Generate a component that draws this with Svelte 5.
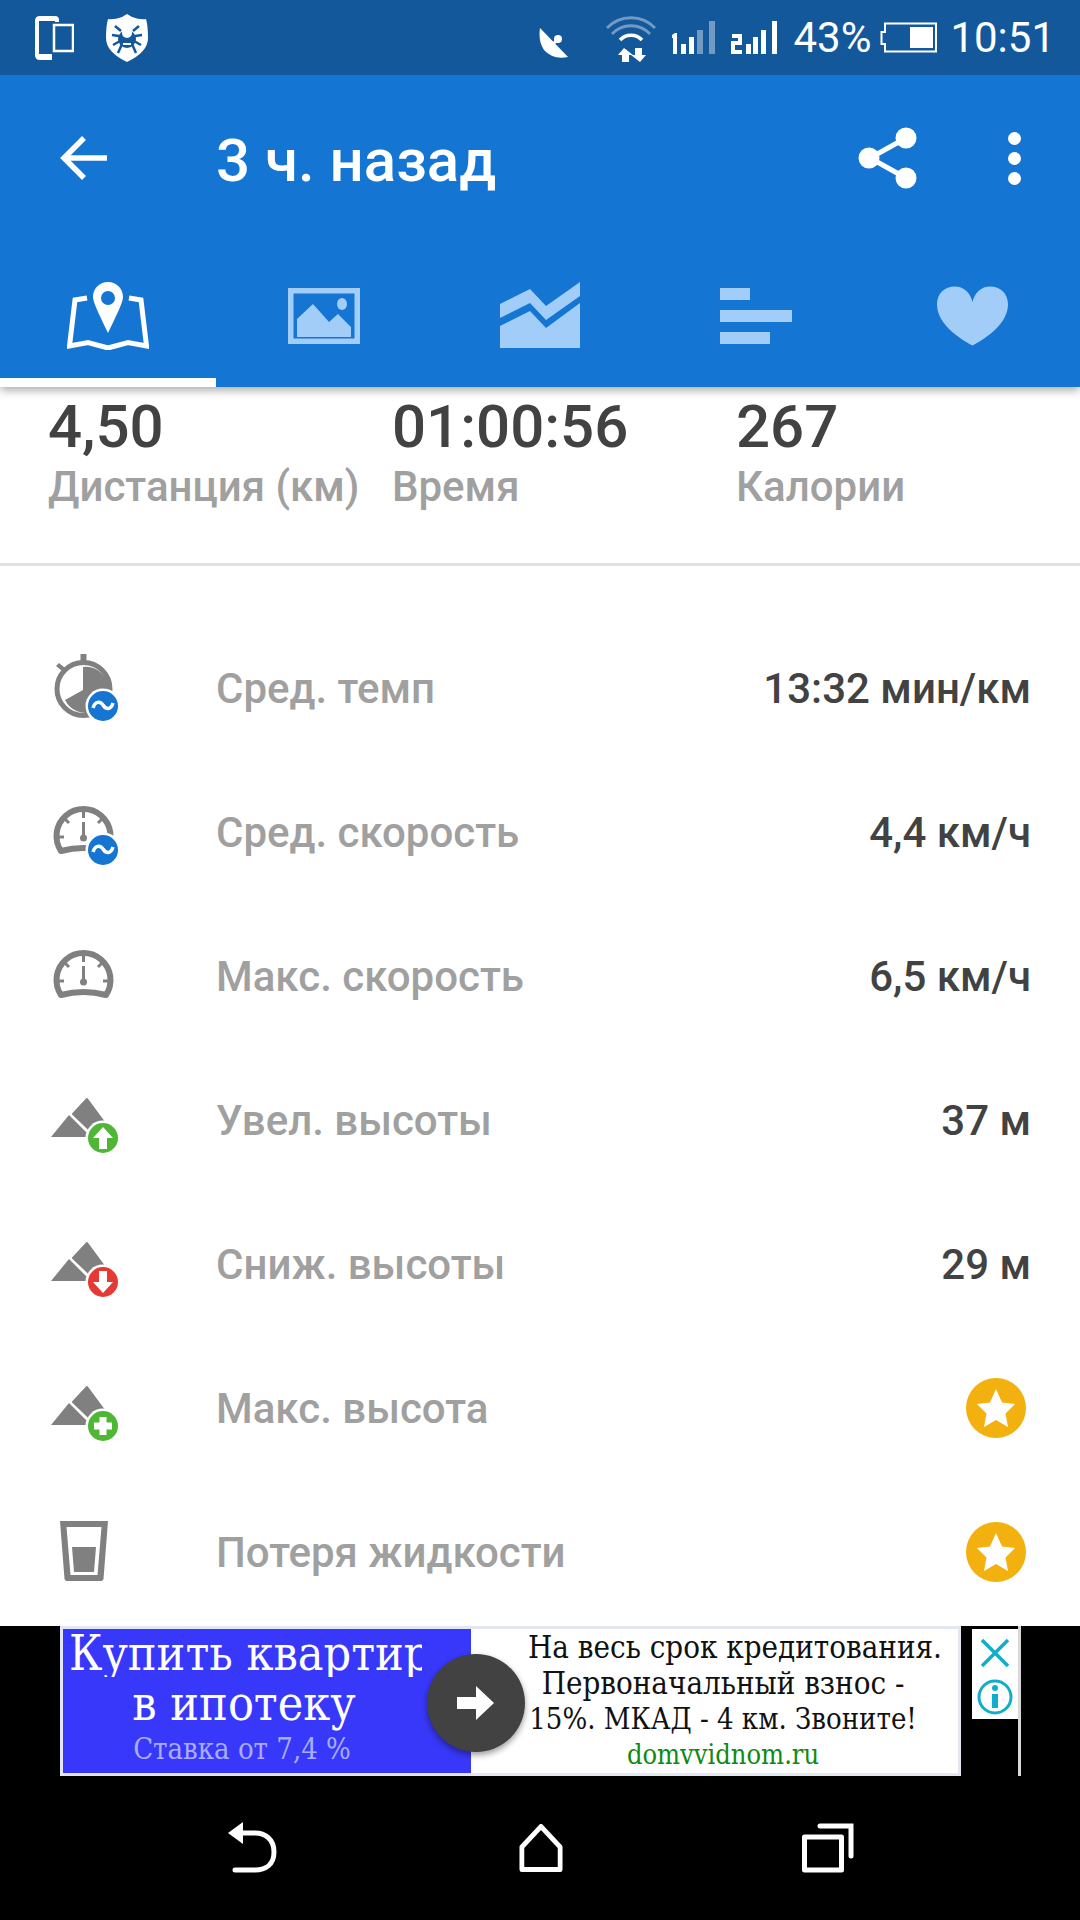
<script>
    const rows = [
        { icon: "pace", label: "Сред. темп", value: "13:32 мин/км" },
        { icon: "avg", label: "Сред. скорость", value: "4,4 км/ч" },
        { icon: "gauge", label: "Макс. скорость", value: "6,5 км/ч" },
        { icon: "up", label: "Увел. высоты", value: "37 м" },
        { icon: "down", label: "Сниж. высоты", value: "29 м" },
        { icon: "plus", label: "Макс. высота", star: true },
        { icon: "glass", label: "Потеря жидкости", star: true }
    ];
    const stats = [
        { value: "4,50", label: "Дистанция (км)" },
        { value: "01:00:56", label: "Время" },
        { value: "267", label: "Калории" }
    ];
</script>

{#snippet gauge()}
    <path d="M17 53A27 27 0 1 1 62 53Q39.5 47 17 53Z" fill="none" stroke="#808080" stroke-width="6" stroke-linejoin="round"/>
    <path d="M39.5 14V20M21 21L25 25M58 21L54 25M14 39H20M59 39H65" stroke="#808080" stroke-width="3" fill="none"/>
    <path d="M39.5 24V38" stroke="#808080" stroke-width="3"/>
    <circle cx="39.5" cy="40" r="3.5" fill="#808080"/>
{/snippet}

{#snippet mountains()}
    <path d="M43 13L60 36V50H52L29 28Z" fill="#808080" stroke="#808080" stroke-width="2" stroke-linejoin="round"/>
    <path d="M25 29L7 51H47Z" fill="#808080"/>
{/snippet}

{#snippet badge(color)}
    <circle cx="59" cy="52" r="17.5" fill="#fff"/>
    <circle cx="59" cy="52" r="15" fill={color}/>
{/snippet}

{#snippet wave()}
    {@render badge("#1475d2")}
    <path d="M49 54C51 47 56 47 59 51C62 56 67 56 69 49" fill="none" stroke="#fff" stroke-width="3.5"/>
{/snippet}

{#snippet rowIcon(name)}
    <svg class="row-icon" viewBox="0 0 80 70" width="80" height="70">
        {#if name === "pace"}
            <circle cx="39.5" cy="35" r="26.5" fill="none" stroke="#808080" stroke-width="5"/>
            <path d="M36.500 0H42.500V9H36.500Z" fill="#808080"/>
            <path d="M15 9L21 14L18 17L12 12Z" fill="#808080"/>
            <path d="M39 36V13A23 23 0 1 1 21 46Z" fill="#808080"/>
            {@render wave()}
        {:else if name === "avg"}
            {@render gauge()}
            {@render wave()}
        {:else if name === "gauge"}
            {@render gauge()}
        {:else if name === "up"}
            {@render mountains()}
            {@render badge("#4fb636")}
            <path d="M59 41L69 52H63V63H55V52H49Z" fill="#fff"/>
        {:else if name === "down"}
            {@render mountains()}
            {@render badge("#e53935")}
            <path d="M59 63L69 52H63V41H55V52H49Z" fill="#fff"/>
        {:else if name === "plus"}
            {@render mountains()}
            {@render badge("#4fb636")}
            <path d="M55.500 43H62.500V48.500H68V55.500H62.500V61H55.500V55.500H50V48.500H55.500Z" fill="#fff"/>
        {:else}
            <path fill-rule="evenodd" d="M16 3H64L59.500 61Q59.300 63 57 63H23Q20.700 63 20.500 61ZM22.500 9L26.500 57H53.500L57.500 9Z" fill="#808080"/>
            <path d="M28 29H52L50 54H30Z" fill="#808080"/>
        {/if}
    </svg>
{/snippet}

<div class="screen">
    <header class="appbar">
        <div class="status">
            <svg class="st-phone" viewBox="0 0 39 44" width="39" height="44">
                <path d="M5 0H20Q24 0 24 4V6H20V5H4V38H17V44H5Q0 44 0 39V5Q0 0 5 0Z" fill="#fff"/>
                <rect x="19" y="9" width="19" height="26" fill="none" stroke="#fff" stroke-width="2.500"/>
            </svg>
            <svg class="st-shield" viewBox="0 0 44 48" width="44" height="48">
                <path d="M22 0L27 3Q35 6 41 5Q43 12 43 24Q43 38 22 48Q1 38 1 24Q1 12 3 5Q9 6 17 3Z" fill="#fff"/>
                <path d="M10 12L16 17M34 12L28 17M7 21L14 22M37 21L30 22M8 31L15 27M36 31L29 27M13 39L17 30M31 39L27 30" stroke="#14589c" stroke-width="2.500"/>
                <circle cx="22" cy="25" r="9" fill="#14589c"/>
                <circle cx="22" cy="19" r="5" fill="#fff"/>
                <path d="M18 30H26" stroke="#fff" stroke-width="2"/>
            </svg>
            <span class="grow"></span>
            <svg class="st-dish" viewBox="0 0 30 30" width="30" height="30">
                <path d="M1 0L29 29Q14 32 5 22Q-1 13 1 0Z" fill="#fff"/>
                <circle cx="19" cy="11" r="4" fill="#fff"/>
                <path d="M14 16L19 11" stroke="#fff" stroke-width="3"/>
            </svg>
            <svg class="st-wifi" viewBox="0 0 52 50" width="52" height="50">
                <path d="M2 15A33 33 0 0 1 50 15M7 21A26 26 0 0 1 45 21" fill="none" stroke="#fff" stroke-opacity=".4" stroke-width="3"/>
                <path d="M15 27A15 15 0 0 1 37 27" fill="none" stroke="#fff" stroke-width="3.500"/>
                <path d="M18 35L12 42H16V49H23V42H27ZM34 49L40 42H36V35H29V42H25Z" fill="#fff" transform="translate(1 0)"/>
            </svg>
            <svg class="st-sim" viewBox="0 0 44 34" width="44" height="34">
                <path d="M1 14L4 12H6V33H2V17H1Z" fill="#fff"/>
                <rect x="10" y="23" width="5" height="10" fill="#fff"/>
                <rect x="18" y="16" width="5" height="17" fill="#fff"/>
                <rect x="26" y="9" width="6" height="24" fill="#fff" opacity=".4"/>
                <rect x="38" y="0" width="6" height="33" fill="#fff" opacity=".4"/>
            </svg>
            <svg class="st-sim2" viewBox="0 0 47 34" width="47" height="34">
                <path d="M1 13H11V24H4V29H11V33H0V20H7V17H1Z" fill="#fff"/>
                <rect x="15" y="23" width="5" height="10" fill="#fff"/>
                <rect x="22" y="16" width="5" height="17" fill="#fff"/>
                <rect x="30" y="9" width="5" height="24" fill="#fff"/>
                <rect x="41" y="0" width="5" height="33" fill="#fff"/>
            </svg>
            <span class="st-text pct">43%</span>
            <svg class="st-batt" viewBox="0 0 57 31" width="57" height="31">
                <path d="M5 1.500H56V29.500H5V22H1.500V10H5Z" fill="none" stroke="#fff" stroke-width="2"/>
                <rect x="30" y="5" width="23" height="21" fill="#fff"/>
            </svg>
            <span class="st-text clock">10:51</span>
        </div>

        <div class="toolbar">
            <svg class="back" viewBox="0 0 50 50" width="50" height="50">
                <path d="M48 25H6M25 5L5 25L25 45" fill="none" stroke="#fff" stroke-width="5.500"/>
            </svg>
            <h1>3 ч. назад</h1>
            <svg class="share" viewBox="0 0 60 62" width="60" height="62">
                <path d="M48 11L12 31L48 51" fill="none" stroke="#fff" stroke-width="5"/>
                <circle cx="48" cy="11" r="10.500" fill="#fff"/>
                <circle cx="11" cy="31" r="10.500" fill="#fff"/>
                <circle cx="48" cy="51" r="10.500" fill="#fff"/>
            </svg>
            <div class="dots"><i></i><i></i><i></i></div>
        </div>

        <nav class="tabs">
            <div class="tab active">
                <svg viewBox="0 0 82 68" width="82" height="68">
                    <path d="M20 16L8 18L2.500 64L21 60.500L41 66L61 60.500L79.500 64L74 18L62 16" fill="none" stroke="#fff" stroke-width="5"/>
                    <path fill-rule="evenodd" d="M41 0C50 0 56 7 56 15C56 21 48 36 41 51C34 36 26 21 26 15C26 7 32 0 41 0ZM41 9A7 7 0 1 0 41 23A7 7 0 1 0 41 9Z" fill="#fff"/>
                </svg>
            </div>
            <div class="tab low">
                <svg viewBox="0 0 72 56" width="72" height="56" fill="#a3cdf9">
                    <path fill-rule="evenodd" d="M0 0H72V56H0ZM5.500 5.500V50.500H66.500V5.500Z"/>
                    <path d="M9 33L25 18L41 36L50 28L63 41V51H9Z" transform="translate(0 -2)"/>
                    <ellipse cx="54" cy="16" rx="5" ry="6"/>
                </svg>
            </div>
            <div class="tab">
                <svg viewBox="0 0 80 66" width="80" height="66" fill="#a3cdf9">
                    <path d="M0 22L30 7L46 24L80 0V14L46 38L30 21L0 36Z"/>
                    <path d="M0 44L30 29L46 46L80 21V66H0Z"/>
                </svg>
            </div>
            <div class="tab low">
                <svg viewBox="0 0 72 56" width="72" height="56" fill="#a3cdf9">
                    <rect width="30" height="12"/>
                    <rect y="22" width="72" height="12"/>
                    <rect y="44" width="50" height="12"/>
                </svg>
            </div>
            <div class="tab heart">
                <svg viewBox="0 0 72 60" width="71" height="60" fill="#a3cdf9">
                    <path d="M36 60C18 50 0 36 0 18C0 7 8 0 18 0C27 0 34 6 36 16C38 6 45 0 54 0C64 0 72 7 72 18C72 36 54 50 36 60Z"/>
                </svg>
            </div>
        </nav>
    </header>

    <section class="stats">
        {#each stats as s}
            <div class="stat">
                <strong>{s.value}</strong>
                <span>{s.label}</span>
            </div>
        {/each}
    </section>

    <section class="list">
        {#each rows as row}
            <div class="row">
                {@render rowIcon(row.icon)}
                <span class="label">{row.label}</span>
                {#if row.star}
                    <svg class="star" viewBox="0 0 60 60" width="60" height="60">
                        <circle cx="30" cy="30" r="30" fill="#f2b10e"/>
                        <path d="M30 11L36 24.500L49 26L39.500 35.500L42 49L30 42L18 49L20.500 35.500L11 26L24 24.500Z" fill="#fff"/>
                    </svg>
                {:else}
                    <span class="value">{row.value}</span>
                {/if}
            </div>
        {/each}
    </section>

    <section class="ad">
        <div class="banner">
            <div class="blue">
                <div class="clip">Купить квартиру</div>
                <div class="big">в ипотеку</div>
                <div class="rate">Ставка от 7,4 %</div>
            </div>
            <div class="copy">
                <div>На весь срок кредитования.</div>
                <div class="shift">Первоначальный взнос -</div>
                <div class="shift tight">15%. МКАД - 4 км. Звоните!</div>
                <div class="shift site">domvvidnom.ru</div>
            </div>
            <div class="go">
                <svg viewBox="0 0 38 34" width="38" height="34">
                    <path d="M0 11H19V0L37 17L19 34V23H0Z" fill="#fff"/>
                </svg>
            </div>
        </div>
        <div class="choices">
            <svg viewBox="0 0 46 90" width="46" height="90">
                <path d="M10 11L36 37M36 11L10 37" stroke="#11aecb" stroke-width="3.500"/>
                <circle cx="23" cy="68" r="16" fill="none" stroke="#11aecb" stroke-width="3"/>
                <circle cx="23" cy="59" r="3" fill="#11aecb"/>
                <rect x="20" y="65" width="6" height="14" fill="#11aecb"/>
            </svg>
        </div>
        <div class="edge"></div>
    </section>

    <footer class="navbar">
        <svg viewBox="0 0 52 52" width="52" height="52">
            <path d="M0 11L15 0V22Z" fill="#fff"/>
            <path d="M12 11H27C37 11 46 17 46 30C46 43 37 48 27 48H7" fill="none" stroke="#fff" stroke-width="5" stroke-linecap="round"/>
        </svg>
        <svg viewBox="0 0 46 48" width="44" height="48" preserveAspectRatio="none">
            <path d="M23 2.500L43 23V45.500H3V23Z" fill="none" stroke="#fff" stroke-width="5" stroke-linejoin="round"/>
        </svg>
        <svg viewBox="0 0 52 50" width="52" height="50">
            <rect x="2.500" y="14" width="37" height="33" fill="none" stroke="#fff" stroke-width="5" stroke-linejoin="round"/>
            <path d="M18 3H49V33" fill="none" stroke="#fff" stroke-width="5" stroke-linecap="round"/>
        </svg>
    </footer>
</div>

<style>
    :global(body) {
        margin: 0;
        background: #fff;
    }

    .screen {
        width: 1080px;
        height: 1920px;
        display: flex;
        flex-direction: column;
        overflow: hidden;
        font-family: Roboto, sans-serif;
        background: #fff;
    }

    .appbar {
        position: relative;
        z-index: 1;
        background: #1475d2;
        box-shadow: 0 3px 9px rgba(0, 0, 0, .35);
    }

    .status {
        height: 75px;
        background: #14589c;
        display: flex;
        align-items: center;
        padding: 0 25px 0 35px;
        color: #fff;
    }
    .st-phone { margin-right: 31px; }
    .grow { flex: 1; }
    .st-dish { margin: 11px 36px 0 0; }
    .st-wifi { margin: 0 14px 0 0; }
    .st-sim { margin: 0 16px 0 0; }
    .st-sim2 { margin: 0 15px 0 0; }
    .st-text { font-size: 42px; line-height: 75px; }
    .pct { margin-right: 9px; }
    .st-batt { margin-right: 13px; }

    .toolbar {
        height: 136px;
        box-sizing: border-box;
        display: flex;
        align-items: center;
        padding: 30px 59px 0 59px;
        color: #fff;
    }
    .back { margin-right: 107px; }
    h1 {
        flex: 1;
        margin: 4px 0 0;
        font-size: 60px;
        font-weight: 500;
    }
    .share { margin-right: 90px; }
    .dots {
        display: flex;
        flex-direction: column;
        gap: 7px;
        width: 13px;
    }
    .dots i {
        width: 13px;
        height: 13px;
        border-radius: 50%;
        background: #fff;
    }

    .tabs {
        height: 176px;
        display: flex;
    }
    .tab {
        width: 216px;
        display: flex;
        justify-content: center;
        padding-top: 71px;
        height: 176px;
        box-sizing: border-box;
    }
    .tab svg { display: block; }
    .tab.active { border-bottom: 9px solid #fff; }
    .tab.low { padding-top: 77px; }
    .tab.heart { padding-top: 75px; }

    .stats {
        height: 179px;
        box-sizing: border-box;
        display: flex;
        padding-left: 48px;
        border-bottom: 3px solid #e0e0e0;
    }
    .stat {
        width: 344px;
        padding-top: 7px;
        display: flex;
        flex-direction: column;
    }
    .stat strong {
        font-size: 60px;
        line-height: 66px;
        font-weight: 500;
        color: #424242;
    }
    .stat span {
        font-size: 42px;
        line-height: 54px;
        font-weight: 500;
        color: #a0a0a0;
    }

    .list {
        padding-top: 51px;
        flex: 1;
    }
    .row {
        height: 144px;
        display: flex;
        align-items: center;
        padding: 0 49px 0 44px;
    }
    .row-icon { margin-right: 92px; flex: none; }
    .label {
        flex: 1;
        margin-bottom: 2px;
        font-size: 42px;
        font-weight: 500;
        color: #a0a0a0;
    }
    .value {
        margin-bottom: 2px;
        font-size: 42px;
        font-weight: 500;
        color: #424242;
    }
    .star { margin: 0 5px 2px 0; }

    .ad {
        position: relative;
        height: 150px;
        background: #000;
        display: flex;
        padding-left: 60px;
        font-family: "DejaVu Serif Condensed", "DejaVu Serif", serif;
        font-stretch: condensed;
    }
    .banner {
        position: relative;
        width: 901px;
        box-sizing: border-box;
        border: 3px solid #e4e6f2;
        display: flex;
        background: #fff;
    }
    .blue {
        width: 408px;
        background: #3838fa;
        color: #fff;
        text-align: center;
        flex: none;
    }
    .clip {
        width: 353px;
        margin-left: 6px;
        overflow: hidden;
        white-space: nowrap;
        text-align: left;
        font-size: 48px;
        line-height: 48px;
    }
    .big {
        width: 352px;
        margin-left: 5px;
        font-size: 48px;
        line-height: 52px;
    }
    .rate {
        width: 352px;
        margin-left: 3px;
        font-size: 29px;
        line-height: 40px;
        color: #a9adff;
    }
    .copy {
        flex: 1;
        padding-left: 41px;
        text-align: center;
        font-size: 31px;
        line-height: 36px;
        color: #111;
        white-space: nowrap;
    }
    .shift { padding-right: 24px; }
    .tight { font-size: 29px; }
    .site {
        color: #0f8a12;
        font-size: 27px;
    }
    .go {
        position: absolute;
        left: 364px;
        top: 25px;
        width: 98px;
        height: 98px;
        border-radius: 50%;
        background: #424242;
        box-shadow: 0 3px 6px rgba(0, 0, 0, .4);
        display: flex;
        align-items: center;
        justify-content: center;
    }
    .choices {
        margin: 3px 0 0 11px;
        width: 46px;
        height: 90px;
        background: #fff;
    }
    .choices svg { display: block; }
    .edge {
        width: 3px;
        background: #d8d8d8;
    }

    .navbar {
        height: 144px;
        background: #000;
        display: flex;
        align-items: center;
        padding: 0 226px 0 228px;
        justify-content: space-between;
    }
</style>
